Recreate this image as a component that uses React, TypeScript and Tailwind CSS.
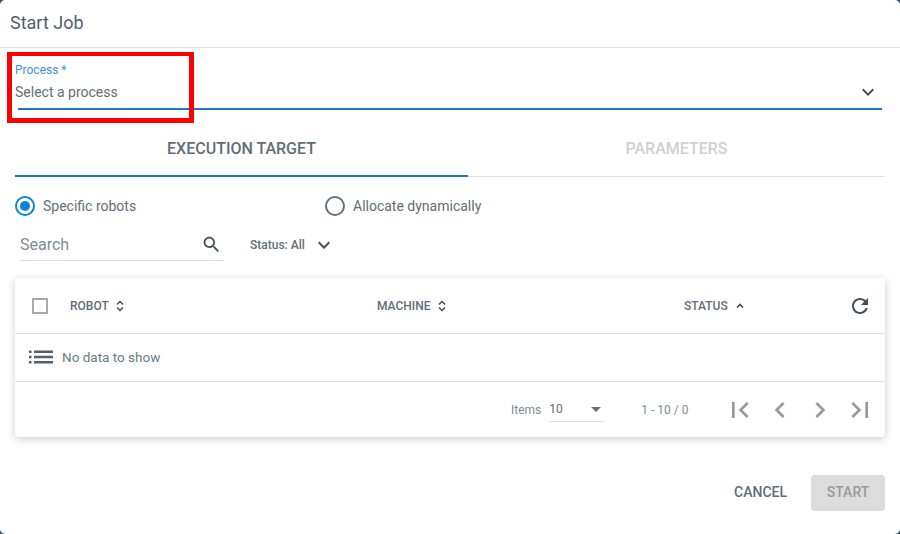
function Icon({ d, size, color }: { d: string; size: number; color: string }) {
  return (
    <svg width={size} height={size} viewBox="0 0 24 24" fill={color} className="shrink-0">
      <path d={d} />
    </svg>
  );
}

const icons = {
  expand: "M16.59 8.59L12 13.17 7.41 8.59 6 10l6 6 6-6z",
  search:
    "M15.5 14h-.79l-.28-.27C15.41 12.59 16 11.11 16 9.5 16 5.91 13.09 3 9.5 3S3 5.91 3 9.5 5.91 16 9.5 16c1.61 0 3.09-.59 4.23-1.57l.27.28v.79l5 4.99L20.49 19l-4.99-5zm-6 0C7.01 14 5 11.99 5 9.5S7.01 5 9.5 5 14 7.01 14 9.5 11.99 14 9.5 14z",
  refresh:
    "M17.65 6.35C16.2 4.9 14.21 4 12 4c-4.42 0-7.99 3.58-7.99 8s3.57 8 7.99 8c3.73 0 6.84-2.55 7.73-6h-2.08c-.82 2.33-3.04 4-5.65 4-3.31 0-6-2.69-6-6s2.69-6 6-6c1.66 0 3.14.69 4.22 1.78L13 11h7V4l-2.35 2.35z",
  first: "M18.41 16.59L13.82 12l4.59-4.59L17 6l-6 6 6 6zM6 6h2v12H6z",
  prev: "M15.41 7.41L14 6l-6 6 6 6 1.41-1.41L10.83 12z",
  next: "M10 6L8.59 7.41 13.17 12l-4.58 4.59L10 18l6-6z",
  last: "M5.59 7.41L10.18 12l-4.59 4.59L7 18l6-6-6-6zM16 6h2v12h-2z",
};

function Radio({ label, checked }: { label: string; checked?: boolean }) {
  return (
    <div className="flex items-center gap-2">
      <div
        className={
          checked
            ? "flex h-5 w-5 items-center justify-center rounded-full border-2 border-[#0a84d6]"
            : "flex h-5 w-5 items-center justify-center rounded-full border-2 border-[#5f7480]"
        }
      >
        {checked && <div className="h-2.5 w-2.5 rounded-full bg-[#0a84d6]" />}
      </div>
      <span className="text-sm text-[#5f6e77]">{label}</span>
    </div>
  );
}

function SortHeader({ label }: { label: string }) {
  return (
    <div className="flex items-center gap-[7px]">
      <span className="text-xs font-medium text-[#5f6e77]">{label}</span>
      <svg width="8" height="12" viewBox="0 0 8 12" fill="none" stroke="#3f505a" strokeWidth="1.5">
        <path d="M1 4.5 4 1.5 7 4.5" />
        <path d="M1 7.5 4 10.5 7 7.5" />
      </svg>
    </div>
  );
}

export default function App() {
  return (
    <div className="h-[534px] w-[900px] overflow-hidden bg-[#27475f] font-['Roboto',sans-serif]">
      <div className="relative h-full rounded-[5px] bg-white">
        {/* Title */}
        <div className="flex h-[48px] items-center border-b border-[#e0e0e0] pb-[2px] pl-2.5">
          <h1 className="text-[18px] font-normal text-[#526069]">Start Job</h1>
        </div>

        {/* Process select */}
        <div className="px-[15px] pt-[15px]">
          <div className="text-xs leading-[14px] text-[#3f8fe0]">Process *</div>
          <div className="flex h-[31px] items-center justify-between pb-[2px] text-sm text-[#5f6e77]">
            <span>Select a process</span>
            <div className="mr-[5px] mt-[1px]">
              <Icon d={icons.expand} size={24} color="#3f505a" />
            </div>
          </div>
          <div className="mx-[3px] h-[2px] bg-[#1976d2]" />
        </div>

        {/* Tabs */}
        <div className="mx-[15px] mt-[10px] flex h-[57px] border-b border-[#e0e0e0]">
          <div className="-mb-px flex h-[57px] w-[453px] items-center justify-center border-b-2 border-[#1976d2] pt-[2px] text-base font-medium text-[#5f6e77]">
            EXECUTION TARGET
          </div>
          <div className="flex h-[56px] flex-1 items-center justify-center pt-[2px] text-base font-medium text-[#d0d0d0]">
            PARAMETERS
          </div>
        </div>

        {/* Target */}
        <div className="mt-[19px] flex px-[15px]">
          <div className="w-[310px]">
            <Radio label="Specific robots" checked />
          </div>
          <Radio label="Allocate dynamically" />
        </div>

        {/* Filters */}
        <div className="mt-[13px] flex items-center pl-5">
          <div className="flex h-[32px] w-[204px] items-center justify-between border-b border-[#e0e0e0] pr-[2px]">
            <span className="text-base text-[#7d8d96]">Search</span>
            <Icon d={icons.search} size={21} color="#3f505a" />
          </div>
          <div className="ml-[26px] flex items-center gap-[7px] text-xs font-medium text-[#5f6e77]">
            <span>Status: All</span>
            <Icon d={icons.expand} size={24} color="#3f505a" />
          </div>
        </div>

        {/* Table */}
        <div className="mx-[15px] mt-[17px] rounded bg-white shadow-[0_2px_8px_rgba(0,0,0,0.2)]">
          <div className="flex h-[56px] items-center border-b border-[#e0e0e0]">
            <div className="ml-[17px] h-4 w-4 rounded-[1px] border-2 border-[#aaaaaa]" />
            <div className="ml-[22px] w-[307px]">
              <SortHeader label="ROBOT" />
            </div>
            <div className="w-[307px]">
              <SortHeader label="MACHINE" />
            </div>
            <div className="flex items-center gap-[8px]">
              <span className="text-xs font-medium text-[#5f6e77]">STATUS</span>
              <svg width="8" height="6" viewBox="0 0 8 6" fill="none" stroke="#3f505a" strokeWidth="1.75">
                <path d="M1 4.5 4 1.5 7 4.5" />
              </svg>
            </div>
            <div className="ml-auto mr-[13px]">
              <Icon d={icons.refresh} size={24} color="#3f505a" />
            </div>
          </div>
          <div className="flex h-[48px] items-center border-b border-[#e0e0e0] pb-[1px] pl-[14px]">
            <svg width="24" height="14" viewBox="0 0 24 14" fill="#526069">
              <rect x="0" y="0.5" width="2.5" height="2.5" />
              <rect x="0" y="5.75" width="2.5" height="2.5" />
              <rect x="0" y="11" width="2.5" height="2.5" />
              <rect x="5" y="0.5" width="19" height="2.5" />
              <rect x="5" y="5.75" width="19" height="2.5" />
              <rect x="5" y="11" width="19" height="2.5" />
            </svg>
            <span className="ml-[9px] text-[13.5px] text-[#6b7c86]">No data to show</span>
          </div>
          <div className="flex h-[55px] items-center pr-[9px]">
            <span className="ml-[496px] text-xs text-[#7d8d96]">Items</span>
            <div className="ml-2 flex h-[25px] w-[56px] items-center justify-between border-b border-[#e0e0e0] pr-[4px]">
              <span className="text-xs text-[#5f6e77]">10</span>
              <div className="h-0 w-0 border-x-[5px] border-t-[5px] border-x-transparent border-t-[#5f7480]" />
            </div>
            <span className="ml-[36px] text-xs text-[#7d8d96]">1 - 10 / 0</span>
            <div className="ml-auto flex items-center gap-2">
              <Icon d={icons.first} size={32} color="#9a9a9a" />
              <Icon d={icons.prev} size={32} color="#9a9a9a" />
              <Icon d={icons.next} size={32} color="#9a9a9a" />
              <Icon d={icons.last} size={32} color="#9a9a9a" />
            </div>
          </div>
        </div>

        {/* Actions */}
        <div className="mt-[38px] flex items-center justify-end pr-[15px]">
          <span className="pb-[2px] text-sm font-medium text-[#5f6e77]">CANCEL</span>
          <div className="ml-6 flex h-9 w-[74px] items-center justify-center rounded bg-[#dcdcdc] pb-[2px] text-sm font-medium text-[#9a9a9a]">
            START
          </div>
        </div>

        {/* Annotation box */}
        <div className="absolute left-[7px] top-[52px] h-[71px] w-[187px] border-[5px] border-t-4 border-[#ff0000]" />
      </div>
    </div>
  );
}
